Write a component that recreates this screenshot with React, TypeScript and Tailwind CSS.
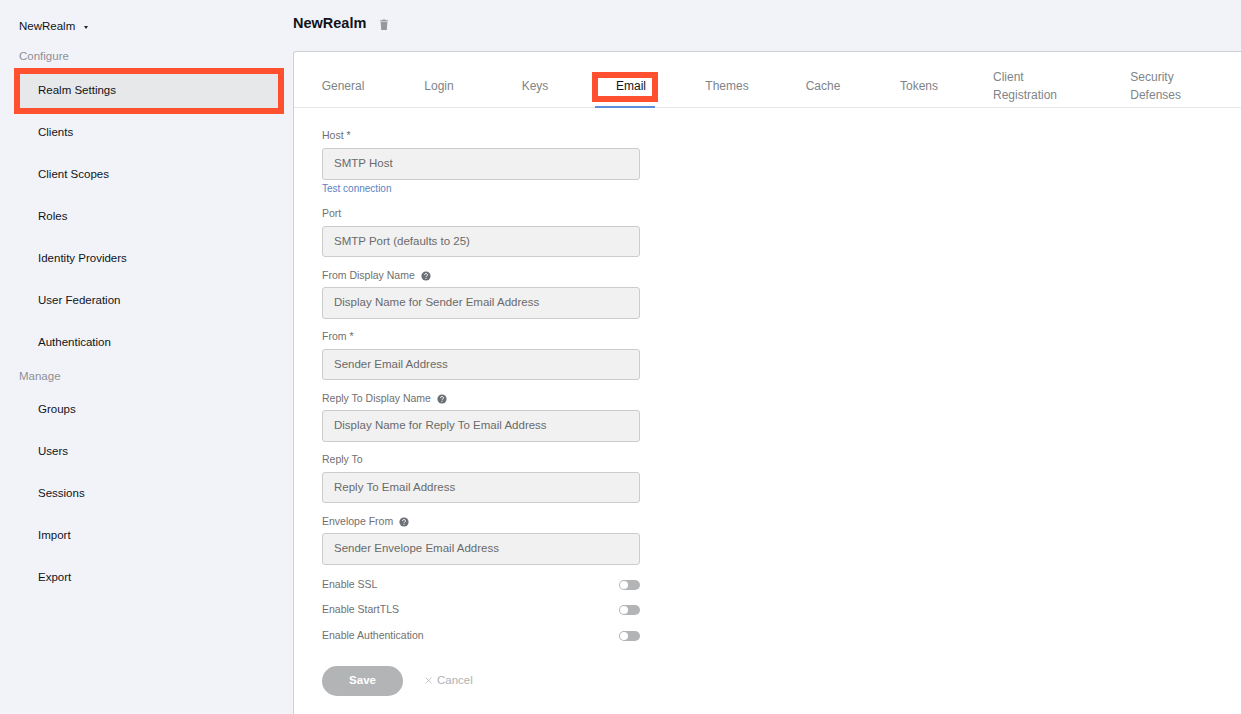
import React from 'react';
import { X } from "lucide-react";

const configureItems = ["Realm Settings", "Clients", "Client Scopes", "Roles", "Identity Providers", "User Federation", "Authentication"];
const manageItems = ["Groups", "Users", "Sessions", "Import", "Export"];
const tabs = ["General", "Login", "Keys", "Email", "Themes", "Cache", "Tokens", "Client Registration", "Security Defenses"];

const fields = [
  { label: "Port", placeholder: "SMTP Port (defaults to 25)" },
  { label: "From Display Name", placeholder: "Display Name for Sender Email Address", help: true },
  { label: "From *", placeholder: "Sender Email Address" },
  { label: "Reply To Display Name", placeholder: "Display Name for Reply To Email Address", help: true },
  { label: "Reply To", placeholder: "Reply To Email Address" },
  { label: "Envelope From", placeholder: "Sender Envelope Email Address", help: true },
];

const HelpIcon = () => (
  <svg width="10" height="10" viewBox="0 0 10 10" className="shrink-0">
    <circle cx="5" cy="5" r="4.6" fill="#6b6f76" />
    <path d="M3.6 3.9a1.4 1.4 0 1 1 2.1 1.2c-.5.3-.7.5-.7 1" fill="none" stroke="#fff" strokeWidth="1" />
    <rect x="4.5" y="6.8" width="1" height="1" fill="#fff" />
  </svg>
);

const TrashIcon = () => (
  <svg width="8" height="11" viewBox="0 0 8 11">
    <path d="M2.6 0.4h2.8l.4.8H8v1H0v-1h2.2z" fill="#96989c" />
    <path d="M0.7 2.8h6.6L6.8 11H1.2z" fill="#96989c" />
  </svg>
);

const Field = ({ label, placeholder, help }: { label: string; placeholder: string; help?: boolean }) => (
  <div className="mb-[7.5px]">
    <div className="flex h-[22.5px] items-center gap-[6px] text-[10.5px] text-[#707070]">
      <span>{label}</span>
      {help && <HelpIcon />}
    </div>
    <div className="flex h-[31.5px] w-[318px] items-center rounded-[3px] border border-[#cccccc] bg-[#f1f1f1] px-[11px] text-[11.5px] text-[#6a6a6a]">
      {placeholder}
    </div>
  </div>
);

const Toggle = ({ label }: { label: string }) => (
  <div className="flex h-[25.5px] w-[318px] items-center justify-between text-[10.5px] text-[#707070]">
    <span>{label}</span>
    <div className="flex h-[10px] w-[21px] items-center rounded-full bg-[#b3b4b6] pl-[1px]">
      <div className="h-[8px] w-[8px] rounded-full bg-white" />
    </div>
  </div>
);

const NavItem = ({ name, active }: { name: string; active?: boolean }) => (
  active ? (
    <div className="ml-[14px] flex h-[46px] w-[270px] items-center border-[6px] border-[#ff5130] bg-[#e7e8ea] pl-[18px] -my-[2px] text-[11.5px] text-[#10131a]">
      {name}
    </div>
  ) : (
    <div className="flex h-[42px] items-center pl-[38px] text-[11.5px] text-[#10131a]">{name}</div>
  )
);

const App = () => {
  return (
    <div className="flex h-[714px] w-[1241px] overflow-hidden bg-[#f2f3f8]" style={{ fontFamily: '"Liberation Sans", Arial, sans-serif' }}>
      <aside className="w-[293px] shrink-0">
        <div className="flex items-center gap-[9px] pl-[19px] pt-[19px] text-[11.5px] leading-[14px] text-[#10131a]">
          <span>NewRealm</span>
          <span className="mt-[2px] h-0 w-0 border-x-[2.5px] border-t-[3px] border-x-transparent border-t-[#222]" />
        </div>
        <div className="mt-[13px] h-[20px] pl-[19px] text-[11.5px] leading-[20px] text-[#8e9096]">Configure</div>
        <div className="mt-[4px]">
          {configureItems.map((item) => <NavItem key={item} name={item} active={item === "Realm Settings"} />)}
        </div>
        <div className="mt-[2px] h-[20px] pl-[19px] text-[11.5px] leading-[20px] text-[#8e9096]">Manage</div>
        <div className="mt-[3px]">
          {manageItems.map((item) => <NavItem key={item} name={item} />)}
        </div>
      </aside>

      <main className="flex min-w-0 flex-1 flex-col">
        <div className="flex h-[51px] shrink-0 items-center gap-[14px] pb-[3px]">
          <h1 className="text-[14.5px] font-bold text-[#10131a]">NewRealm</h1>
          <TrashIcon />
        </div>
        <div className="flex-1 rounded-tl-[3px] border-l border-t border-[#cfd0d3] bg-white">
          <div className="flex h-[56px] border-b border-[#e6e6e6] pl-[1px]">
            {tabs.map((tab) => (
              <div key={tab} className="relative flex h-full items-center justify-center px-[26px] pt-[12px] text-[12px] text-[#808489] min-w-[96px]">
                <span className={tab === "Email" ? "text-[#10131a]" : ""}>{tab}</span>
                {tab === "Email" && (
                  <>
                    <div className="absolute left-[9px] top-[20px] h-[30px] w-[66px] border-[6px] border-[#ff5130]" />
                    <div className="absolute bottom-[-1px] left-[12px] h-[2px] w-[60px] bg-[#5b8dd9]" />
                  </>
                )}
              </div>
            ))}
          </div>
          <div className="pl-[28px] pt-[17px]">
            <div className="mb-[7.5px]">
              <div className="flex h-[22.5px] items-center text-[10.5px] text-[#707070]">Host *</div>
              <div className="flex h-[32px] w-[318px] items-center rounded-[3px] border border-[#cccccc] bg-[#f1f1f1] px-[11px] text-[11.5px] text-[#6a6a6a]">SMTP Host</div>
              <div className="mt-[2px] text-[10px] leading-[14px] text-[#5b82c4]">Test connection</div>
            </div>
            {fields.map((f) => <Field key={f.label} {...f} />)}
            <Toggle label="Enable SSL" />
            <Toggle label="Enable StartTLS" />
            <Toggle label="Enable Authentication" />
            <div className="mt-[17px] flex items-center gap-[20px]">
              <div className="flex h-[30px] w-[81px] items-center justify-center rounded-full bg-[#b3b4b6] text-[11.5px] font-bold text-white">Save</div>
              <div className="flex items-center gap-[3px] text-[11.5px] text-[#b0b1b3]"><X size={11} strokeWidth={1.5} />Cancel</div>
            </div>
          </div>
        </div>
      </main>
    </div>
  );
};

export default App;
